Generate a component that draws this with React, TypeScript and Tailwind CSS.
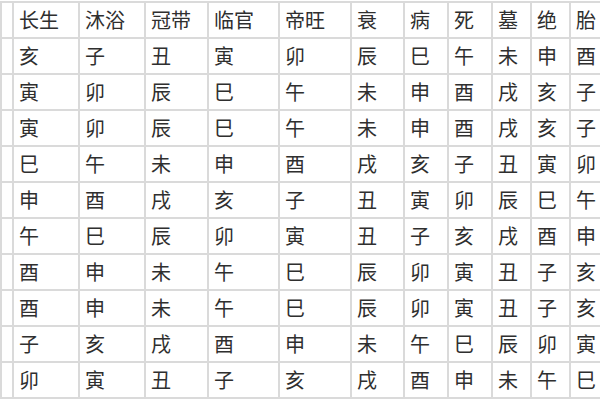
const HEADERS = ['', '长生', '沐浴', '冠带', '临官', '帝旺', '衰', '病', '死', '墓', '绝', '胎']

const ROWS = [
  '亥子丑寅卯辰巳午未申酉',
  '寅卯辰巳午未申酉戌亥子',
  '寅卯辰巳午未申酉戌亥子',
  '巳午未申酉戌亥子丑寅卯',
  '申酉戌亥子丑寅卯辰巳午',
  '午巳辰卯寅丑子亥戌酉申',
  '酉申未午巳辰卯寅丑子亥',
  '酉申未午巳辰卯寅丑子亥',
  '子亥戌酉申未午巳辰卯寅',
  '卯寅丑子亥戌酉申未午巳',
]

const COLS = [
  'w-[12px]',
  'w-[66px]',
  'w-[66px]',
  'w-[63px]',
  'w-[71px]',
  'w-[72px]',
  'w-[53px]',
  'w-[44px]',
  'w-[44px]',
  'w-[39px]',
  'w-[39px]',
  'w-[60px]',
]

export default function App() {
  return (
    <div className="h-[400px] w-[600px] overflow-hidden bg-white pt-px">
      <table
        className="w-[629px] table-fixed border-collapse text-[20px] leading-none text-[#2f2f2f]"
        style={{ fontFamily: '"Noto Sans CJK SC", "Noto Sans CJK JP", sans-serif' }}
      >
        <colgroup>
          {COLS.map((c, i) => (
            <col key={i} className={c} />
          ))}
        </colgroup>
        <thead>
          <tr className="h-[36px]">
            {HEADERS.map((h, i) => (
              <th
                key={i}
                className="border-2 border-[#dadada] pl-[5px] text-left font-normal whitespace-nowrap"
              >
                {h}
              </th>
            ))}
          </tr>
        </thead>
        <tbody>
          {ROWS.map((row, r) => (
            <tr key={r} className="h-[36px]">
              <td className="border-2 border-[#dadada]" />
              {row.split('').map((ch, i) => (
                <td key={i} className="border-2 border-[#dadada] pl-[5px] text-left">
                  {ch}
                </td>
              ))}
            </tr>
          ))}
        </tbody>
      </table>
    </div>
  )
}
